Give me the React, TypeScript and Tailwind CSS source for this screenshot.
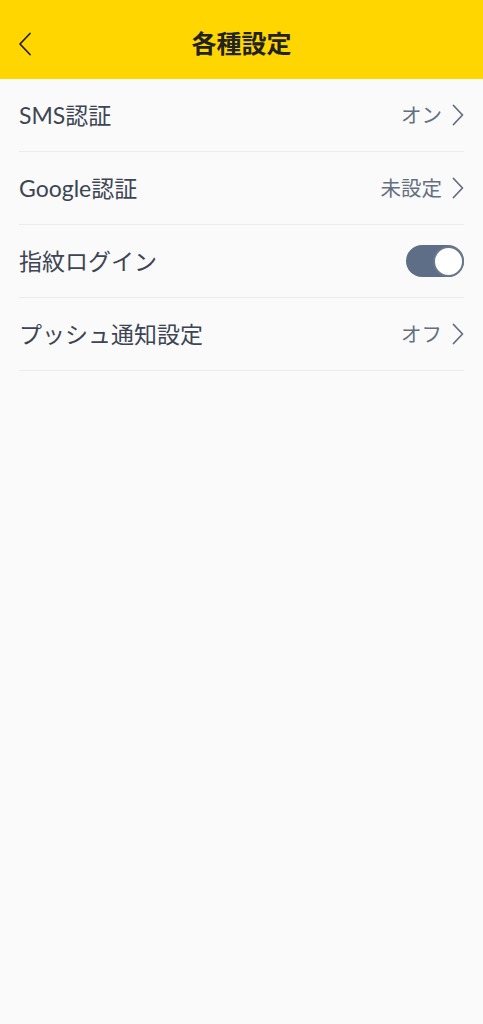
import { useState } from "react";

const font = { fontFamily: '"Lato", "Noto Sans CJK JP", sans-serif' };

function Chevron({ className }: { className: string }) {
  return (
    <svg viewBox="0 0 12 22" className={className} fill="none">
      <path
        d="M1.5 1.5 L10.5 11 L1.5 20.5"
        stroke="currentColor"
        strokeWidth="1.8"
        strokeLinecap="round"
        strokeLinejoin="round"
      />
    </svg>
  );
}

function Row({ label, value }: { label: string; value: string }) {
  return (
    <div className="flex h-[73px] items-center justify-between border-b border-[#ececee]">
      <span className="text-[23px] text-[#3d4554]">{label}</span>
      <div className="flex items-center gap-[10px] text-[#647080]">
        <span className="text-[20.5px]">{value}</span>
        <Chevron className="h-[22px] w-[12px]" />
      </div>
    </div>
  );
}

export default function App() {
  const [on, setOn] = useState(true);

  return (
    <div className="min-h-[1024px] w-full bg-[#fafafa]" style={font}>
      {/* ヘッダー */}
      <div className="relative flex h-[79px] items-center justify-center bg-[#ffd600]">
        <button className="absolute left-[18px] top-[32px] text-[#222]">
          <svg viewBox="0 0 14 24" className="h-[24px] w-[14px]" fill="none">
            <path
              d="M12 1.5 L2 12 L12 22.5"
              stroke="currentColor"
              strokeWidth="1.8"
              strokeLinecap="round"
              strokeLinejoin="round"
            />
          </svg>
        </button>
        <h1 className="mt-[8px] text-[25px] font-bold text-[#222]">各種設定</h1>
      </div>

      {/* 設定リスト */}
      <div className="px-[19px]">
        <Row label="SMS認証" value="オン" />
        <Row label="Google認証" value="未設定" />
        <div className="flex h-[73px] items-center justify-between border-b border-[#ececee]">
          <span className="text-[23px] text-[#3d4554]">指紋ログイン</span>
          <button
            onClick={() => setOn(!on)}
            className={`flex h-[32px] w-[58px] items-center rounded-full ${
              on ? "justify-end bg-[#5e6e86]" : "justify-start bg-[#c9ced6]"
            }`}
          >
            <span className="h-[31px] w-[31px] rounded-full border-[2px] border-[#6a788e] bg-white" />
          </button>
        </div>
        <Row label="プッシュ通知設定" value="オフ" />
      </div>
    </div>
  );
}
